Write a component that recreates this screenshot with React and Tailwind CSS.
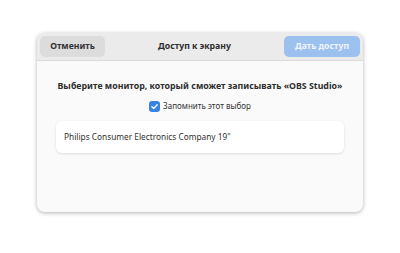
import React, { useState } from "react";

const font = { fontFamily: '"Noto Sans", "Open Sans", sans-serif' };

const CheckIcon = () => (
  <svg viewBox="0 0 12 12" className="w-[9px] h-[9px]" fill="none">
    <path d="M2.5 6.2 L5 8.6 L9.6 3.6" stroke="white" strokeWidth="1.8" strokeLinecap="round" strokeLinejoin="round" />
  </svg>
);

export default function App() {
  const [remember, setRemember] = useState(true);

  return (
    <div className="w-[400px] h-[253px] bg-white flex justify-center pt-[33px]" style={font}>
      <div className="w-[326px] h-[179px] rounded-[8px] bg-[#fafafa] shadow-[0_1px_4px_rgba(0,0,0,0.3)] overflow-hidden flex flex-col">
        {/* Header */}
        <div className="h-[28px] flex items-center justify-between px-[3px] bg-[#ebebeb] border-b border-[#dadada]">
          <button className="w-[65px] h-[21px] rounded-[5px] bg-[#dcdcdc] text-[8.7px] font-bold text-[#333]">
            Отменить
          </button>
          <span className="text-[8.7px] font-bold text-[#2e2e2e]">Доступ к экрану</span>
          <button className="w-[76px] h-[21px] rounded-[5px] bg-[#9dc1ef] text-[8.7px] font-bold text-[#eef4fc]">
            Дать доступ
          </button>
        </div>

        {/* Body */}
        <div className="flex flex-col items-center px-[19px] pt-[19px]">
          <p className="text-[8.8px] font-bold text-[#2e2e2e] leading-[12px] whitespace-nowrap">
            Выберите монитор, который сможет записывать «OBS Studio»
          </p>
          <label className="mt-[8px] flex items-center gap-[3px] cursor-pointer" onClick={() => setRemember(!remember)}>
            <span className={`w-[11px] h-[11px] rounded-[3px] flex items-center justify-center ${remember ? "bg-[#3584e4]" : "bg-white border border-[#ccc]"}`}>
              {remember && <CheckIcon />}
            </span>
            <span className="text-[8px] text-[#333] leading-[12px]">Запомнить этот выбор</span>
          </label>
          <div className="mt-[9px] w-full h-[32px] rounded-[6px] bg-white shadow-[0_1px_3px_rgba(0,0,0,0.12)] flex items-center px-[8px]">
            <span className="text-[8.3px] text-[#333]">Philips Consumer Electronics Company 19"</span>
          </div>
        </div>
      </div>
    </div>
  );
}
